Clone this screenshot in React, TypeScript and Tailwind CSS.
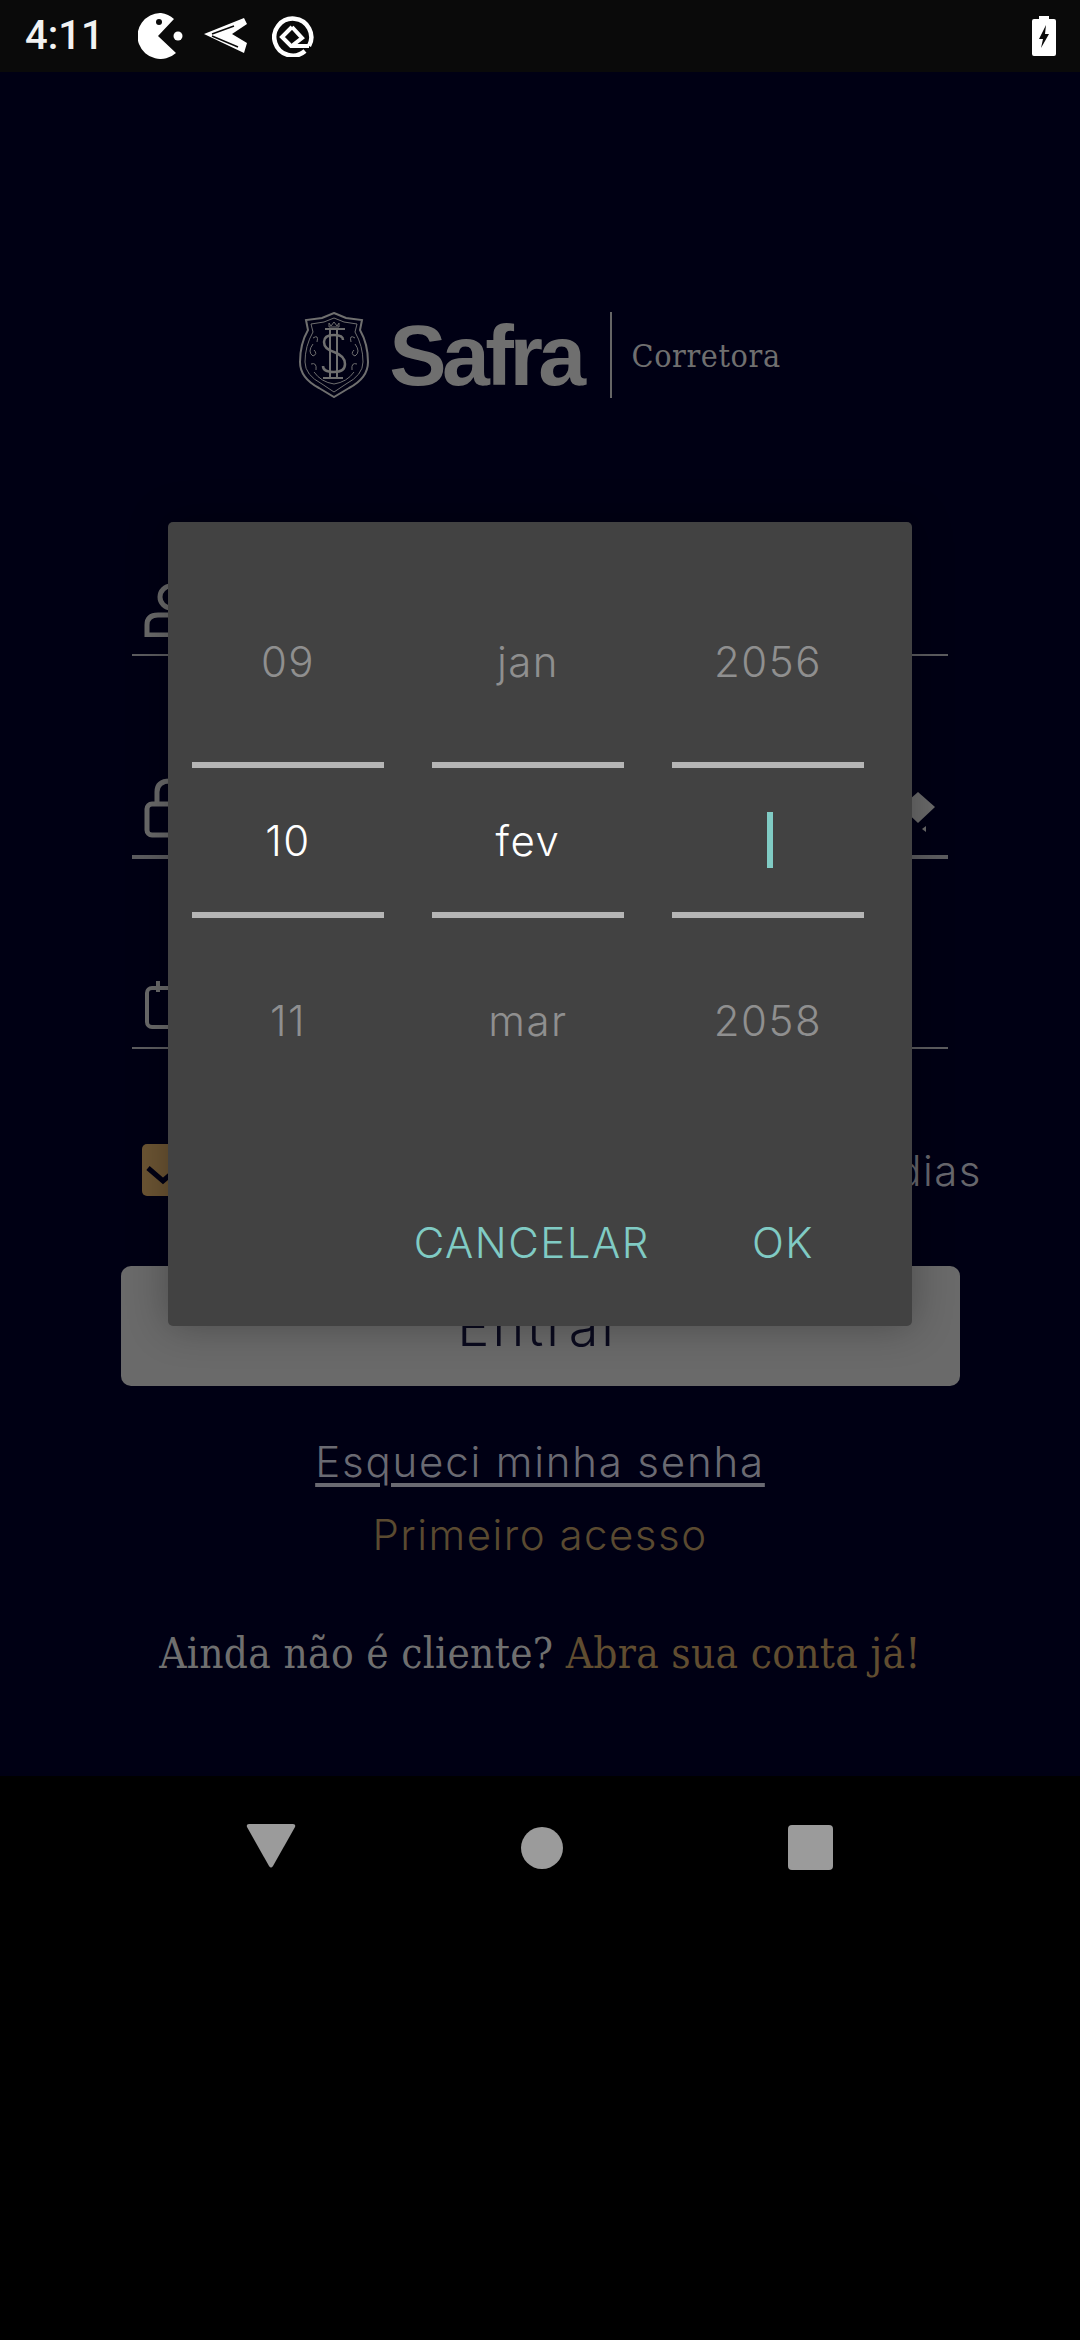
const wheelFont = { fontFamily: "Inter, 'Open Sans', sans-serif" };
const slabFont = { fontFamily: "'DejaVu Serif Condensed', 'DejaVu Serif', serif" };

function Pacman() {
  return (
    <svg width="46" height="46" viewBox="0 0 46 46" fill="#fff">
      <path d="M23 0 A23 23 0 1 0 38 40 L20 23 L36 6 A23 23 0 0 0 23 0 Z" />
      <circle cx="21" cy="9" r="3" fill="#0a0a0a" />
      <circle cx="40" cy="23" r="4.5" />
    </svg>
  );
}

function Plane() {
  return (
    <svg width="44" height="38" viewBox="0 0 44 38">
      <path d="M0 17 L40 1 L43 7 L28 17 L43 26 L40 36 Z" fill="#fff" />
      <path d="M8 17 L30 9 M8 19 L34 30" stroke="#0a0a0a" strokeWidth="1.5" fill="none" />
    </svg>
  );
}

function QLogo() {
  return (
    <svg width="42" height="42" viewBox="0 0 42 42" fill="none" stroke="#fff" strokeWidth="4.5">
      <path d="M33 36 A18.5 18.5 0 1 1 37 31" />
      <path d="M20 12 L10 22 L19 31 L37 31 M20 12 L30 23 L21 30" strokeWidth="4" />
    </svg>
  );
}

function Battery() {
  return (
    <svg width="24" height="40" viewBox="0 0 24 40">
      <path d="M7 0 H17 V3 H22 Q24 3 24 5 V38 Q24 40 22 40 H2 Q0 40 0 38 V5 Q0 3 2 3 H7 Z" fill="#fff" />
      <path d="M14 9 L7 23 H11 L9 32 L17 18 H13 Z" fill="#0a0a0a" />
    </svg>
  );
}

function Shield() {
  return (
    <svg width="70" height="86" viewBox="0 0 70 86" fill="none" stroke="#6f6f6f">
      <path d="M35 1 L47 6 L63 8 L61 18 Q69 32 69 50 Q69 66 50 76 L35 85 L20 76 Q1 66 1 50 Q1 32 9 18 L7 8 L23 6 Z" strokeWidth="2" />
      <path d="M35 6 L45 10 L58 12 L56 20 Q64 34 64 50 Q64 63 47 72 L35 80 L23 72 Q6 63 6 50 Q6 34 14 20 L12 12 L25 10 Z" strokeWidth="1" />
      <path d="M44 28 Q44 23 35 23 Q25 23 25 30 Q25 37 35 40 Q46 44 46 52 Q46 60 35 60 Q24 60 24 54" strokeWidth="2.5" />
      <path d="M31 17 V66 M38 17 V66" strokeWidth="2" />
      <path d="M26 17 H46 M24 66 H44" strokeWidth="2" />
      <path d="M30 11 L32 14 L35 10 L38 14 L40 11 V15 H30 Z" strokeWidth="1" />
      <path d="M14 26 Q20 22 18 30 M56 26 Q50 22 52 30" strokeWidth="1" />
      <path d="M14 32 Q8 40 14 44 Q19 42 15 38 M56 32 Q62 40 56 44 Q51 42 55 38" strokeWidth="1" />
      <path d="M12 52 Q18 50 17 58 M58 52 Q52 50 53 58" strokeWidth="1" />
      <path d="M15 60 Q22 70 35 72 Q48 70 55 60" strokeWidth="1" />
    </svg>
  );
}

function UserIcon() {
  return (
    <svg width="52" height="54" viewBox="0 0 52 54" fill="none" stroke="#6a6a6a" strokeWidth="5">
      <circle cx="27" cy="14" r="11" />
      <path d="M3 52 V42 Q3 32 14 32 H40 Q50 32 50 42 V52 Z" />
    </svg>
  );
}

function LockIcon() {
  return (
    <svg width="52" height="60" viewBox="0 0 52 60" fill="none" stroke="#6a6a6a" strokeWidth="5">
      <path d="M13 26 V14 Q13 3 26 3 Q39 3 39 14 V26" />
      <rect x="3" y="26" width="46" height="31" rx="5" />
    </svg>
  );
}

function CalendarIcon() {
  return (
    <svg width="52" height="50" viewBox="0 0 52 50" fill="none" stroke="#6a6a6a" strokeWidth="4">
      <rect x="3" y="8" width="44" height="39" rx="5" />
      <path d="M14 1 V12 M36 1 V12" />
    </svg>
  );
}

function EyeIcon() {
  return (
    <svg width="60" height="46" viewBox="0 0 60 46" fill="#6a6a6a">
      <path d="M30 0 L47 15 L30 31 L13 15 Z" />
      <path d="M34 37 L38 34 L38 40 Z" />
    </svg>
  );
}

function Field({ icon, thick, right }: { icon: React.ReactNode; thick?: boolean; right?: React.ReactNode }) {
  return (
    <div
      className={`flex h-[80px] w-[816px] items-end justify-between pl-3 pb-[17px] ${
        thick ? "border-b-4 border-[#5c5c5f]" : "border-b-2 border-[#5c5c5f]"
      }`}
    >
      {icon}
      {right}
    </div>
  );
}

function WheelColumn({ prev, current, next, caret }: { prev: string; current?: string; next: string; caret?: boolean }) {
  return (
    <div className="flex w-[192px] flex-col items-center text-[42px] font-light tracking-[1.5px]" style={wheelFont}>
      <div className="flex h-[240px] items-center pt-[38px] text-[#8f8f8f]">{prev}</div>
      <div className="flex h-[156px] w-full items-center justify-center border-y-[6px] border-[#b5b5b5] text-white">
        {caret ? <div className="ml-[4px] h-[56px] w-[6px] bg-[#80cbc4]" /> : current}
      </div>
      <div className="flex h-[204px] items-center text-[#8f8f8f]">{next}</div>
    </div>
  );
}

export default function App() {
  return (
    <div className="relative flex h-[2340px] w-[1080px] flex-col overflow-hidden bg-black">
      <div className="flex h-[72px] items-center bg-[#0a0a0a] pl-[25px] pr-[24px]">
        <span className="mr-[34px] text-[40px] font-medium text-[#f2f2f2]" style={{ fontFamily: "Roboto, sans-serif" }}>
          4:11
        </span>
        <div className="flex items-center">
          <Pacman />
          <div className="ml-[20px]">
            <Plane />
          </div>
          <div className="ml-[24px]">
            <QLogo />
          </div>
        </div>
        <div className="ml-auto">
          <Battery />
        </div>
      </div>

      <main className="flex h-[1704px] flex-col items-center bg-[#000014]">
        <div className="mt-[240px] flex h-[86px] items-center">
          <Shield />
          <span
            className="ml-[20px] text-[86px] font-bold leading-none tracking-[-4.6px] text-[#6f6f6f]"
            style={{ fontFamily: "'Liberation Sans', sans-serif" }}
          >
            Safra
          </span>
          <div className="ml-[28px] h-[86px] w-[2px] bg-[#666]" />
          <span className="ml-[20px] mt-[2px] text-[32px] tracking-[0.6px] text-[#6f6f6f]" style={slabFont}>
            Corretora
          </span>
        </div>

        <div className="mt-[178px]">
          <Field icon={<UserIcon />} />
        </div>
        <div className="mt-[123px]">
          <Field thick icon={<LockIcon />} right={<EyeIcon />} />
        </div>
        <div className="mt-[110px]">
          <Field icon={<CalendarIcon />} />
        </div>

        <div className="ml-[44px] mt-[95px] flex h-[52px] w-[840px] items-center justify-between">
          <div className="h-[52px] w-[52px] rounded-[5px] bg-[#6b5433]">
            <svg width="52" height="52" viewBox="0 0 52 52" fill="none" stroke="#000014" strokeWidth="5">
              <path d="M6 24 L21 37 L36 24" />
            </svg>
          </div>
          <span className="text-[42px] font-light tracking-[1.5px] text-[#66666c]" style={wheelFont}>
            dias
          </span>
        </div>

        <div
          className="ml-[1px] mt-[70px] flex h-[120px] w-[839px] items-center justify-center rounded-[10px] bg-[#6a6a6a] text-[54px] font-light tracking-[3px] text-[#0a0a1e]"
          style={wheelFont}
        >
          Entrar
        </div>

        <div
          className="mt-[44px] text-[42px] font-light leading-[64px] tracking-[1.8px] text-[#6a6a72] underline underline-offset-[6px]"
          style={wheelFont}
        >
          Esqueci minha senha
        </div>
        <div className="mt-[9px] text-[42px] font-light leading-[64px] tracking-[1.5px] text-[#5a4a30]" style={wheelFont}>
          Primeiro acesso
        </div>
        <div className="mt-[55px] text-[42px] leading-[64px] tracking-[0.3px] text-[#6f6f6f]" style={slabFont}>
          Ainda não é cliente? <span className="text-[#604d30]">Abra sua conta já!</span>
        </div>
      </main>

      <nav className="flex h-[564px] items-start bg-black pt-[48px]">
        <div className="flex w-full justify-center gap-[225px] pr-[2px]">
          <svg width="50" height="44" viewBox="0 0 50 44" fill="#9b9b9b">
            <path d="M3 0 H47 Q50 0 49 3 L27 42 Q25 45 23 42 L1 3 Q0 0 3 0 Z" />
          </svg>
          <div className="mt-[3px] h-[42px] w-[42px] rounded-full bg-[#9b9b9b]" />
          <div className="mt-[1px] h-[45px] w-[45px] rounded-[4px] bg-[#9b9b9b]" />
        </div>
      </nav>

      <div className="absolute left-[168px] top-[522px] h-[804px] w-[744px] rounded-[5px] bg-[#424242] shadow-[0_0_40px_rgba(0,0,0,0.3)]">
        <div className="flex gap-[48px] pl-[24px]">
          <WheelColumn prev="09" current="10" next="11" />
          <WheelColumn prev="jan" current="fev" next="mar" />
          <WheelColumn prev="2056" caret next="2058" />
        </div>
        <div
          className="absolute bottom-[62px] right-[98px] flex gap-[102px] text-[42px] font-light leading-none tracking-[1.5px] text-[#80cbc4]"
          style={wheelFont}
        >
          <span>CANCELAR</span>
          <span>OK</span>
        </div>
      </div>
    </div>
  );
}
